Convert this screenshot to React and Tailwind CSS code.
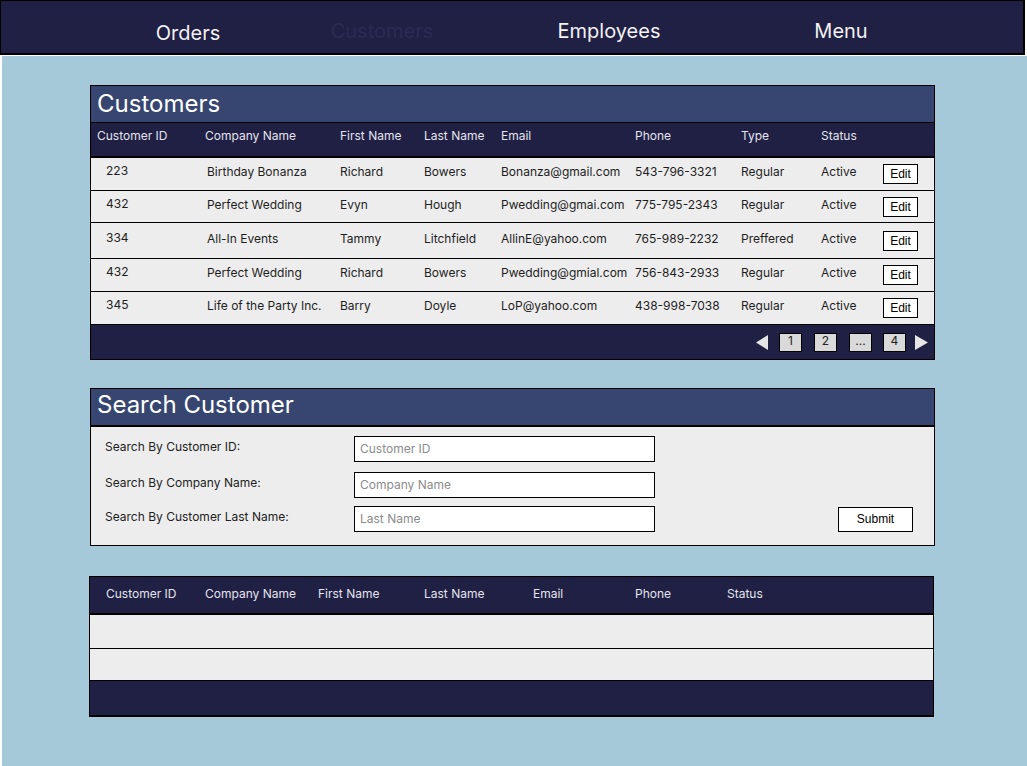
import React from "react";

const rows = [
  { id: "223", company: "Birthday Bonanza", first: "Richard", last: "Bowers", email: "Bonanza@gmail.com", phone: "543-796-3321", type: "Regular", status: "Active", h: "h-[33px]" },
  { id: "432", company: "Perfect Wedding", first: "Evyn", last: "Hough", email: "Pwedding@gmai.com", phone: "775-795-2343", type: "Regular", status: "Active", h: "h-[32px]" },
  { id: "334", company: "All-In Events", first: "Tammy", last: "Litchfield", email: "AllinE@yahoo.com", phone: "765-989-2232", type: "Preffered", status: "Active", h: "h-[36px]" },
  { id: "432", company: "Perfect Wedding", first: "Richard", last: "Bowers", email: "Pwedding@gmial.com", phone: "756-843-2933", type: "Regular", status: "Active", h: "h-[33px]" },
  { id: "345", company: "Life of the Party Inc.", first: "Barry", last: "Doyle", email: "LoP@yahoo.com", phone: "438-998-7038", type: "Regular", status: "Active", h: "h-[33px]" },
];

const grid = "grid grid-cols-[114px_135px_84px_77px_134px_106px_80px_62px_1fr]";

function PageBox({ children, className = "" }) {
  return (
    <div className={"w-[23px] h-[19px] bg-[#d9d9d9] border border-black flex items-center justify-center text-[12px] text-[#222] leading-none pb-[2px] " + className}>
      {children}
    </div>
  );
}

export default function App() {
  return (
    <div className="w-[1027px] h-[766px] overflow-hidden bg-white font-[Inter,sans-serif] flex flex-col">
      {/* Top nav */}
      <nav className="w-[1025px] h-[55px] shrink-0 bg-[#201f44] border-t border-l border-r-2 border-b-2 border-black flex items-start text-[20px] leading-[28px]">
        <div className="ml-[97px] w-[180px] text-center pt-[18px] text-[#f2f2f2]">Orders</div>
        <div className="ml-[14px] w-[180px] text-center pt-[16px] text-[#2c2b52]">Customers</div>
        <div className="ml-[47px] w-[180px] text-center pt-[16px] text-[#f2f2f2]">Employees</div>
        <div className="ml-[52px] w-[180px] text-center pt-[16px] text-[#f2f2f2]">Menu</div>
      </nav>

      {/* Main blue area */}
      <main className="mt-[1px] ml-[2px] flex-1 bg-[#a5c9d9] flex flex-col">
        {/* Customers panel */}
        <section className="mt-[29px] ml-[88px] w-[845px] border border-black flex flex-col">
          <div className="h-[37px] bg-[#374670] border-b border-black flex items-center pl-[6px] text-[24px] text-white leading-none">
            Customers
          </div>
          <div className={grid + " h-[35px] bg-[#201f44] border-b-2 border-black items-center text-[12px] text-[#e4e4ec] pb-[7px]"}>
            <div className="pl-[6px]">Customer ID</div>
            <div>Company Name</div>
            <div>First Name</div>
            <div>Last Name</div>
            <div>Email</div>
            <div>Phone</div>
            <div>Type</div>
            <div>Status</div>
            <div></div>
          </div>
          {rows.map((r, i) => (
            <div key={i} className={grid + " " + r.h + " bg-[#ededed] border-b border-black items-center text-[12px] text-[#1e1e1e]"}>
              <div className="pl-[15px] pb-[6px]">{r.id}</div>
              <div className="pl-[2px] pb-[4px]">{r.company}</div>
              <div className="pb-[4px]">{r.first}</div>
              <div className="pb-[4px]">{r.last}</div>
              <div className="pb-[4px] whitespace-nowrap">{r.email}</div>
              <div className="pb-[4px]">{r.phone}</div>
              <div className="pb-[4px]">{r.type}</div>
              <div className="pb-[4px]">{r.status}</div>
              <div>
                <button className="w-[35px] h-[20px] bg-white border border-black text-[12px] leading-none text-black font-['Liberation_Sans',Arial,sans-serif]">
                  Edit
                </button>
              </div>
            </div>
          ))}
          <div className="h-[34px] bg-[#201f44] flex items-center justify-end pr-[6px]">
            <svg width="12" height="15" viewBox="0 0 12 15">
              <polygon points="12,0 12,15 0,7.5" fill="#e6e6e6" />
            </svg>
            <PageBox className="ml-[11px]">1</PageBox>
            <PageBox className="ml-[12px]">2</PageBox>
            <PageBox className="ml-[12px] text-[10px]">...</PageBox>
            <PageBox className="ml-[11px]">4</PageBox>
            <svg className="ml-[9px]" width="13" height="15" viewBox="0 0 13 15">
              <polygon points="0,0 13,7.5 0,15" fill="#e6e6e6" />
            </svg>
          </div>
        </section>

        {/* Search panel */}
        <section className="mt-[28px] ml-[88px] w-[845px] border border-black flex flex-col">
          <div className="h-[38px] bg-[#374670] border-b-2 border-black flex items-center pl-[6px] text-[24px] text-white leading-none pb-[5px]">
            Search Customer
          </div>
          <div className="h-[118px] bg-[#ededed] flex flex-col pt-[9px] pl-[14px] text-[12px] text-[#1e1e1e]">
            <div className="flex items-center h-[26px]">
              <div className="w-[249px] pb-[4px]">Search By Customer ID:</div>
              <input className="w-[301px] h-[26px] bg-white border border-black px-[5px] pb-[1px] text-[12px] placeholder:text-[#8c8c8c] outline-none" placeholder="Customer ID" />
            </div>
            <div className="flex items-center h-[26px] mt-[10px]">
              <div className="w-[249px] pb-[4px]">Search By Company Name:</div>
              <input className="w-[301px] h-[26px] bg-white border border-black px-[5px] pb-[1px] text-[12px] placeholder:text-[#8c8c8c] outline-none" placeholder="Company Name" />
            </div>
            <div className="flex items-center h-[26px] mt-[8px]">
              <div className="w-[249px] pb-[4px]">Search By Customer Last Name:</div>
              <input className="w-[301px] h-[26px] bg-white border border-black px-[5px] pb-[2px] text-[12px] placeholder:text-[#8c8c8c] outline-none" placeholder="Last Name" />
              <button className="ml-[183px] w-[75px] h-[25px] bg-white border border-black text-[12px] text-black font-['Liberation_Sans',Arial,sans-serif]">
                Submit
              </button>
            </div>
          </div>
        </section>

        {/* Results table */}
        <section className="mt-[30px] ml-[87px] w-[845px] border-t border-l border-r border-b-2 border-black flex flex-col">
          <div className="h-[38px] bg-[#201f44] border-b-2 border-black flex items-center text-[12px] text-[#e4e4ec] pb-[3px]">
            <div className="pl-[16px] w-[115px]">Customer ID</div>
            <div className="w-[113px]">Company Name</div>
            <div className="w-[106px]">First Name</div>
            <div className="w-[109px]">Last Name</div>
            <div className="w-[102px]">Email</div>
            <div className="w-[92px]">Phone</div>
            <div>Status</div>
          </div>
          <div className="h-[34px] bg-[#ededed] border-b border-black"></div>
          <div className="h-[32px] bg-[#ededed] border-b border-black"></div>
          <div className="h-[34px] bg-[#201f44]"></div>
        </section>
      </main>
    </div>
  );
}
